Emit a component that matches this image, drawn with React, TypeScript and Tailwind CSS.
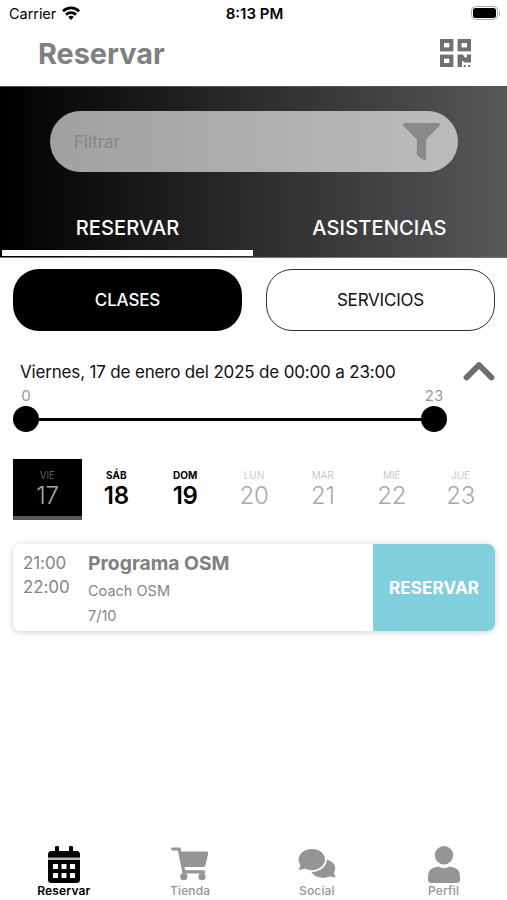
import React, { useState } from 'react';
import { FaFilter } from 'react-icons/fa';

const QrIcon: React.FC<{ className?: string }> = ({ className }) => (
    <svg className={className} viewBox="0 0 31 28">
        <g fill="none" stroke="currentColor" strokeWidth="4">
            <rect x="2" y="2" width="9.4" height="8.4" />
            <rect x="19.6" y="2" width="9.4" height="8.4" />
            <rect x="2" y="17.6" width="9.4" height="8.4" />
        </g>
        <path fill="currentColor" d="M17.6 15.6h5.2l2 2.8h2v-2.8H31v8h-6.4l-2.6-2v6.4h-4.4ZM23.7 26h2v2h-2ZM28 26h2v2h-2Z" />
    </svg>
);

const CalendarIcon: React.FC<{ className?: string }> = ({ className }) => (
    <svg className={className} viewBox="0 0 32 37">
        <path fill="#bbb" d="M0 11h32v3H0Z" />
        <path
            fill="currentColor"
            fillRule="evenodd"
            d="M8.2 0h1.6Q11 0 11 1.2V5h10V1.2Q21 0 22.2 0h1.6Q25 0 25 1.2V5h3.5Q32 5 32 8.5v3H0v-3Q0 5 3.5 5H7V1.2Q7 0 8.2 0ZM0 14h32v19.5q0 3.5-3.5 3.5h-25Q0 37 0 33.5ZM5 18v5h5v-5ZM13.5 18v5h5v-5ZM22 18v5h5v-5ZM5 27v5h5v-5ZM13.5 27v5h5v-5ZM22 27v5h5v-5Z"
        />
    </svg>
);

const CartIcon: React.FC<{ className?: string }> = ({ className }) => (
    <svg className={className} viewBox="0 0 38 34">
        <path d="M1.8 2h6.4l4.6 22.8h20" fill="none" stroke="currentColor" strokeWidth="3.2" strokeLinecap="round" strokeLinejoin="round" />
        <path d="M9 4.5h27q1.6 0 1.3 1.6L34.4 18.6q-.3 1.4-1.8 1.4H12Z" fill="currentColor" />
        <circle cx="12.8" cy="29.7" r="3.6" fill="currentColor" />
        <circle cx="31" cy="29.7" r="3.6" fill="currentColor" />
    </svg>
);

const ChatIcon: React.FC<{ className?: string }> = ({ className }) => (
    <svg className={className} viewBox="0 0 38 34" fill="currentColor">
        <ellipse cx="25" cy="21.5" rx="12.2" ry="9.6" />
        <path d="M35.6 25q.4 3.2 2.2 5.2-4 .6-8-2Z" />
        <ellipse cx="13.8" cy="12.6" rx="15" ry="12.4" className="fill-white" />
        <ellipse cx="13.8" cy="12.6" rx="13.2" ry="10.6" />
        <path d="M2.6 16q-.2 4-2.2 6.6 4.6.4 9-2Z" />
    </svg>
);

const ProfileIcon: React.FC<{ className?: string }> = ({ className }) => (
    <svg className={className} viewBox="0 0 32 37" fill="currentColor">
        <circle cx="16" cy="9.2" r="9.2" />
        <path d="M9.5 20.8q2 0 3.2.8 3.3 1.2 6.6 0 1.2-.8 3.2-.8Q32 21.5 32 31v2.5q0 3.5-3.5 3.5h-25Q0 37 0 33.5V31q0-9.5 9.5-10.2Z" />
    </svg>
);

const days = [
    { name: 'VIE', number: 17, bold: false },
    { name: 'SÁB', number: 18, bold: true },
    { name: 'DOM', number: 19, bold: true },
    { name: 'LUN', number: 20, bold: false },
    { name: 'MAR', number: 21, bold: false },
    { name: 'MIÉ', number: 22, bold: false },
    { name: 'JUE', number: 23, bold: false },
];

const navItems = [
    { label: 'Reservar', icon: <CalendarIcon className="w-8 h-[37px]" /> },
    { label: 'Tienda', icon: <CartIcon className="w-[38px] h-[34px]" /> },
    { label: 'Social', icon: <ChatIcon className="w-[38px] h-[34px]" /> },
    { label: 'Perfil', icon: <ProfileIcon className="w-8 h-[37px]" /> },
];

const StatusBar: React.FC = () => (
    <div className="h-[26px] pl-[9px] pr-[7px] grid grid-cols-3 items-center text-black">
        <div className="flex items-center gap-1.5 pt-px">
            <span className="text-[14.5px] tracking-[-0.05px]">Carrier</span>
            <svg className="w-[18px] h-[14px] -mt-0.5" viewBox="0 0 18 14" fill="none" stroke="currentColor" strokeWidth="2.8">
                <path d="M1 5.2a11.4 11.4 0 0 1 16 0" />
                <path d="M4 8.7a7.1 7.1 0 0 1 10 0" />
                <path d="M9 14 6.2 11a4 4 0 0 1 5.6 0Z" fill="currentColor" stroke="none" />
            </svg>
        </div>
        <span className="pt-0.5 text-center text-[15px] font-semibold whitespace-nowrap">8:13 PM</span>
        <div className="flex items-center justify-end gap-px">
            <div className="w-[27px] h-[14px] rounded-[4.5px] border border-[#aaa] p-px">
                <div className="h-full rounded-[2.5px] bg-black" />
            </div>
            <div className="w-[1.5px] h-[5px] rounded-r-full bg-[#aaa]" />
        </div>
    </div>
);

export default function App() {
    const [tab, setTab] = useState('RESERVAR');
    const [selectedDay, setSelectedDay] = useState(17);
    const [section, setSection] = useState('Reservar');

    return (
        <div className="w-full h-screen flex flex-col bg-white overflow-hidden font-['Inter',sans-serif]">
            <StatusBar />

            <header className="h-[60px] pl-[38px] pr-9 flex items-center justify-between text-[#808080]">
                <h1 className="text-[28.8px] font-bold leading-none -mt-1">Reservar</h1>
                <QrIcon className="w-[31px] h-7 -mt-1.5 text-[#707070]" />
            </header>

            <div className="h-[172px] flex flex-col bg-[linear-gradient(90deg,#000,#58585a)] border-t border-[#555] border-b border-b-[#777]">
                <div className="mt-6 ml-[50px] mr-[49px] h-[61px] rounded-full bg-white/62 pl-6 pr-[18px] flex items-center justify-between">
                    <span className="text-[17px] tracking-[-0.1px] pt-0.5 text-[#858585]">Filtrar</span>
                    <FaFilter className="w-[37px] h-[37px] text-[#8a8a8a]" />
                </div>
                <div className="flex-1 flex pl-0.5 pb-px">
                    {['RESERVAR', 'ASISTENCIAS'].map((name) => (
                        <button
                            key={name}
                            onClick={() => setTab(name)}
                            className={`w-[251px] pt-[33px] border-b-[6px] text-[20px] leading-6 tracking-[0.15px] font-medium text-white ${tab === name ? 'border-white' : 'ml-px border-transparent'}`}
                        >
                            {name}
                        </button>
                    ))}
                </div>
            </div>

            <main className="flex-1 pl-[13px] pr-3 pt-[11px]">
                <div className="flex gap-6">
                    <button className="w-[229px] h-[62px] pt-0.5 rounded-[26px] bg-black text-white text-[17px] tracking-[-0.15px] font-medium">CLASES</button>
                    <button className="w-[229px] h-[62px] pt-0.5 rounded-[26px] border border-[#333] text-[#111] text-[17px] tracking-[-0.2px]">SERVICIOS</button>
                </div>

                <div className="mt-7 pl-[7px] h-[26px] flex items-center justify-between">
                    <span className="text-[17px] pt-0.5 tracking-[-0.17px] text-[#111] whitespace-nowrap">Viernes, 17 de enero del 2025 de 00:00 a 23:00</span>
                    <svg className="w-8 h-5 -mt-0.5" viewBox="0 0 32 20" fill="none" stroke="#6e6e6e" strokeWidth="5.8" strokeLinecap="round" strokeLinejoin="round">
                        <path d="M3.5 16.5 16 4l12.5 12.5" />
                    </svg>
                </div>

                <div className="w-[434px]">
                    <div className="h-[21px] pt-0.5 flex justify-between items-center text-[15px] text-[#999]">
                        <span className="w-[26px] text-center">0</span>
                        <span className="w-[26px] text-center">23</span>
                    </div>
                    <div className="flex items-center">
                        <div className="w-[26px] h-[26px] rounded-full bg-black" />
                        <div className="flex-1 h-[3px] bg-black" />
                        <div className="w-[26px] h-[26px] rounded-full bg-black" />
                    </div>
                </div>

                <div className="mt-[27px] w-[482px] grid grid-cols-7">
                    {days.map((day) => {
                        const selected = day.number === selectedDay;
                        return (
                            <button
                                key={day.name}
                                onClick={() => setSelectedDay(day.number)}
                                className={`h-[61px] pt-[10px] flex flex-col items-center border-b-4 ${selected ? 'bg-black border-[#58585a]' : 'border-transparent'} ${day.bold ? 'font-semibold text-black' : 'font-light text-[#aaa]'}`}
                            >
                                <span className={`text-[10px] leading-3 ${day.bold ? 'font-bold' : selected ? 'text-[#777]' : 'text-[#bbb]'}`}>{day.name}</span>
                                <span className="text-[24px] leading-[30px] tracking-[-0.3px]">{day.number}</span>
                            </button>
                        );
                    })}
                </div>

                <div className="mt-6 w-[482px] h-[87px] flex rounded-lg overflow-hidden bg-white shadow-[0_1px_6px_rgba(0,0,0,0.2)]">
                    <div className="w-[75px] pl-[10px] pt-2 text-[17px] leading-[23.5px] tracking-[-0.1px] text-[#858585]">
                        <p>21:00</p>
                        <p>22:00</p>
                    </div>
                    <div className="flex-1 pt-[7px] text-[14.5px] leading-[25px] text-[#858585]">
                        <p className="text-[19.3px] leading-6 font-bold text-[#808080]">Programa OSM</p>
                        <p className="mt-[3px]">Coach OSM</p>
                        <p>7/10</p>
                    </div>
                    <button className="w-[122px] pt-[3px] bg-[#7fd0dc] text-white text-[17px] tracking-[0.15px] font-bold">RESERVAR</button>
                </div>
            </main>

            <nav className="h-[60px] grid grid-cols-4">
                {navItems.map(({ label, icon }) => (
                    <button
                        key={label}
                        onClick={() => setSection(label)}
                        className={`flex flex-col items-center justify-start ${section === label ? 'pl-px text-black' : 'text-[#959595]'}`}
                    >
                        <span className="h-[44px] pt-1 flex items-center">{icon}</span>
                        <span className={`text-[12px] leading-[13px] tracking-[0.15px] ${section === label ? 'font-semibold' : 'font-medium'}`}>{label}</span>
                    </button>
                ))}
            </nav>
        </div>
    );
}
